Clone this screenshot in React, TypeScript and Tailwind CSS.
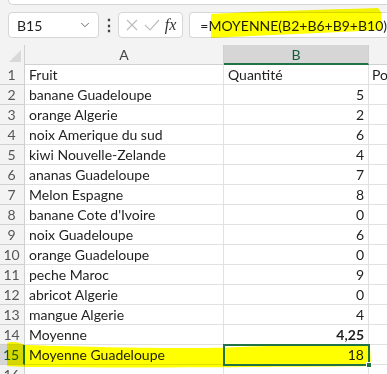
import { ChevronDown } from 'lucide-react';

const ROWS: [string, string][] = [
  ['Fruit', 'Quantité'],
  ['banane Guadeloupe', '5'],
  ['orange Algerie', '2'],
  ['noix Amerique du sud', '6'],
  ['kiwi Nouvelle-Zelande', '4'],
  ['ananas Guadeloupe', '7'],
  ['Melon Espagne', '8'],
  ["banane Cote d'Ivoire", '0'],
  ['noix Guadeloupe', '6'],
  ['orange Guadeloupe', '0'],
  ['peche Maroc', '9'],
  ['abricot Algerie', '0'],
  ['mangue Algerie', '4'],
  ['Moyenne', '4,25'],
  ['Moyenne Guadeloupe', '18'],
  ['', ''],
];

const font = "font-['Lato','Liberation_Sans',sans-serif]";

export default function App() {
  return (
    <div className={`relative h-[374px] w-[387px] overflow-hidden bg-[#f3f3f3] ${font} text-[#1f1f1f]`}>
      {/* bottom of the ribbon */}
      <div className="ml-2 h-[5px] rounded-bl-[6px] border-b border-l border-[#d4d4d4] bg-white" />

      {/* formula bar */}
      <div className="flex h-[40px] items-center pl-2">
        <div className="flex h-[26px] w-[101px] items-center justify-between rounded-[4px] border border-[#d6d6d6] bg-white pl-[8px] pr-[6px] text-[14px]">
          <span>B15</span>
          <ChevronDown size={14} strokeWidth={1.5} className="text-[#555]" />
        </div>
        <div className="flex w-[22px] justify-center text-[16px] font-bold leading-none text-[#444]">⋮</div>
        <div className="flex h-[26px] w-[72px] items-center justify-between rounded-[4px] border border-[#d6d6d6] bg-white px-[6px]">
          <svg width="14" height="14" viewBox="0 0 14 14" className="text-[#bdbdbd]">
            <path d="M2 2 L12 12 M12 2 L2 12" stroke="currentColor" strokeWidth="1.2" fill="none" />
          </svg>
          <svg width="16" height="14" viewBox="0 0 16 14" className="text-[#bdbdbd]">
            <path d="M1 7 L6 12 L15 2" stroke="currentColor" strokeWidth="1.2" fill="none" />
          </svg>
          <span className="font-['Liberation_Serif',serif] text-[16px] italic leading-none text-[#333]">fx</span>
        </div>
        <div className="ml-[6px] flex h-[26px] flex-1 items-center rounded-l-[4px] border border-r-0 border-[#d6d6d6] bg-white pl-[10px] text-[14px] whitespace-nowrap">
          =MOYENNE(B2+B6+B9+B10)
        </div>
      </div>

      {/* column headers */}
      <div className="flex h-[20px] text-[14px] text-[#444]">
        <div className="relative w-[25px] border-r border-[#d0d0d0]">
          <svg width="12" height="12" viewBox="0 0 12 12" className="absolute bottom-[3px] right-[3px]">
            <path d="M12 0 L12 12 L0 12 Z" fill="#d9d9d9" />
          </svg>
        </div>
        <div className="flex w-[199px] items-center justify-center border-b border-r border-[#d0d0d0]">A</div>
        <div className="flex w-[145px] items-center justify-center border-b-2 border-r border-b-[#217346] border-r-[#d0d0d0] bg-[#d6d6d6] text-[#185c37]">B</div>
        <div className="flex-1 border-b border-[#d0d0d0]" />
      </div>

      {/* grid */}
      <div className="bg-white">
        {ROWS.map(([a, b], i) => {
          const n = i + 1;
          const sel = n === 15;
          return (
            <div key={n} className="flex h-[20px] text-[14px] leading-[19px]">
              <div
                className={`w-[25px] border-b pr-[1px] text-center text-[14px] ${
                  sel
                    ? 'border-b-[#d0d0d0] border-r-2 border-r-[#217346] bg-[#d6d6d6] text-[#185c37]'
                    : 'border-r border-[#d0d0d0] bg-[#f3f3f3] text-[#555]'
                }`}
              >
                {n}
              </div>
              <div className="w-[199px] truncate border-b border-r border-[#e1e1e1] pl-[4px]">{a}</div>
              <div
                className={`w-[145px] border-b border-r border-[#e1e1e1] pr-[4px] ${n === 1 ? 'pl-[4px] text-left' : 'text-right'} ${
                  n === 14 ? 'font-bold' : ''
                }`}
              >
                {b}
              </div>
              <div className="flex-1 overflow-hidden whitespace-nowrap border-b border-[#e1e1e1] pl-[3px]">
                {n === 1 ? 'Po' : ''}
              </div>
            </div>
          );
        })}
      </div>

      {/* marker strokes over the screenshot */}
      <svg width="387" height="374" className="pointer-events-none absolute left-0 top-0 mix-blend-multiply">
        <path
          d="M211 14 C260 11 320 10 378 8 L381 12 L381 30 C330 33 260 35 211 38 Z"
          fill="#ffff00"
        />
        <path
          d="M7 343 C12 341 18 342 25 345 C120 348 200 349 240 347 C290 345 330 345 370 346 L371 366 C280 367 150 368 25 367 L7 366 Z"
          fill="#ffff00"
        />
      </svg>

      {/* active cell B15 */}
      <div className="pointer-events-none absolute left-[223px] top-[344px] h-[22px] w-[147px] border-2 border-[#217346]">
        <div className="absolute -bottom-[4px] -right-[4px] h-[6px] w-[6px] border border-white bg-[#217346]" />
      </div>
    </div>
  );
}
